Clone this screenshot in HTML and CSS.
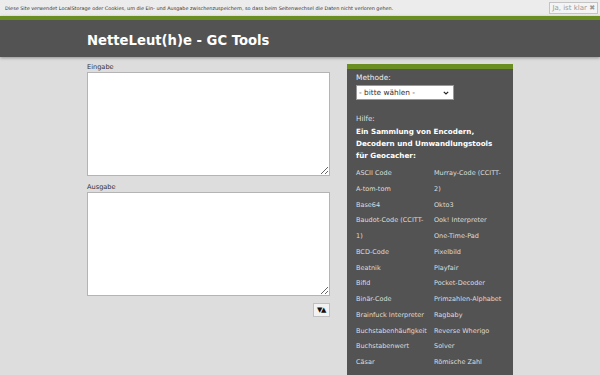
FILE: index.html
```html
<!DOCTYPE html>
<html lang="de">
<head>
<meta charset="utf-8">
<title>NetteLeut(h)e - GC Tools</title>
<link rel="stylesheet" href="styles.css">
</head>
<body>
<div class="cookie">
  <span class="cookie-text">Diese Site verwendet LocalStorage oder Cookies, um die Ein- und Ausgabe zwischenzuspeichern, so dass beim Seitenwechsel die Daten nicht verloren gehen.</span>
  <button class="cookie-btn">Ja, ist klar &#x2716;</button>
</div>
<header class="header">
  <div class="container">
    <h1 class="title">NetteLeut(h)e - GC Tools</h1>
  </div>
</header>
<main class="container main">
  <section class="work">
    <label class="label">Eingabe</label>
    <textarea class="box"></textarea>
    <label class="label label-out">Ausgabe</label>
    <textarea class="box"></textarea>
    <div class="swap-row"><button class="swap">&#x25BC;&#x25B2;</button></div>
  </section>
  <aside class="panel">
    <div class="panel-label">Methode:</div>
    <div class="select-wrap">
      <select class="method"><option>- bitte wählen -</option></select>
      <svg class="chev" width="6" height="4" viewBox="0 0 6 4"><path d="M0.8 0.8 L3 3 L5.2 0.8" fill="none" stroke="#222" stroke-width="1.2"/></svg>
    </div>
    <div class="help">Hilfe:</div>
    <p class="intro">Ein Sammlung von Encodern, Decodern und Umwandlungstools für Geocacher:</p>
    <div class="tools">
      <ul class="col">
        <li>ASCII Code</li>
        <li>A-tom-tom</li>
        <li>Base64</li>
        <li>Baudot-Code (CCITT-<wbr>1)</li>
        <li>BCD-Code</li>
        <li>Beatnik</li>
        <li>Bifid</li>
        <li>Binär-Code</li>
        <li>Brainfuck Interpreter</li>
        <li>Buchstabenhäufigkeit</li>
        <li>Buchstabenwert</li>
        <li>Cäsar</li>
      </ul>
      <ul class="col col-right">
        <li>Murray-Code (CCITT-<wbr>2)</li>
        <li>Okto3</li>
        <li>Ook! Interpreter</li>
        <li>One-Time-Pad</li>
        <li>Pixelbild</li>
        <li>Playfair</li>
        <li>Pocket-Decoder</li>
        <li>Primzahlen-Alphabet</li>
        <li>Ragbaby</li>
        <li>Reverse Wherigo</li>
        <li>Solver</li>
        <li>Römische Zahl</li>
      </ul>
    </div>
  </aside>
</main>
</body>
</html>
```
FILE: styles.css
```css
* { box-sizing: border-box; }
html, body { margin: 0; padding: 0; }
body {
  background: #dddddd;
  font-family: "DejaVu Sans", Verdana, sans-serif;
  color: #333;
  height: 375px;
  overflow: hidden;
}
.cookie {
  height: 16px;
  background: #ececec;
  display: flex;
  align-items: center;
  justify-content: space-between;
  padding: 0 2px 0 5px;
}
.cookie-text {
  font-size: 4.9px;
  color: #333;
}
.cookie-btn {
  font-family: "DejaVu Sans", sans-serif;
  font-size: 7px;
  color: #9a9a9a;
  background: #f4f4f4;
  border: 1px solid #c4c4c4;
  height: 12px;
  padding: 0 2px;
  line-height: 10px;
}
.header {
  border-top: 4px solid #6b8e23;
  background: #535353;
  height: 41px;
  box-shadow: 0 1px 3px rgba(0,0,0,0.35);
}
.container {
  width: 426px;
  margin: 0 auto;
}
.title {
  margin: 0;
  padding-top: 12px;
  font-size: 13.2px;
  font-weight: bold;
  color: #fff;
  line-height: 17px;
}
.main {
  display: flex;
  gap: 17px;
  margin-top: 5px;
}
.work {
  width: 243px;
  display: flex;
  flex-direction: column;
}
.label {
  font-size: 6.6px;
  color: #333;
  margin-top: 1px;
  line-height: 8px;
  height: 9px;
}
.label-out { margin-top: 7px; }
.box {
  width: 243px;
  height: 104px;
  border: 1px solid #b4b4b4;
  background: #fff;
  resize: vertical;
  margin: 0;
}
.swap-row {
  display: flex;
  justify-content: flex-end;
  margin-top: 7px;
}
.swap {
  width: 17px;
  height: 14px;
  padding: 0;
  border: 1px solid #c0c0c0;
  background: #f2f2f2;
  font-family: "DejaVu Sans", sans-serif;
  font-size: 7px;
  color: #111;
  letter-spacing: -1.5px;
  line-height: 12px;
  text-indent: -1px;
}
.panel {
  width: 166px;
  height: 320px;
  margin-top: 2px;
  background: #535353;
  border-top: 5px solid #6b8e23;
  padding: 4px 9px 0 9px;
  color: #eee;
}
.panel-label {
  font-size: 7.4px;
  line-height: 10px;
}
.select-wrap {
  position: relative;
  width: 98px;
  margin-top: 2px;
}
.method {
  display: block;
  width: 98px;
  height: 15px;
  font-family: "DejaVu Sans", sans-serif;
  font-size: 7.4px;
  padding: 0 2px;
  border: 1px solid #999;
  background: #fff;
  color: #333;
  appearance: none;
  -webkit-appearance: none;
  border-radius: 0;
}
.chev {
  position: absolute;
  right: 5px;
  top: 6px;
  pointer-events: none;
}
.help {
  margin-top: 14px;
  font-size: 7.2px;
  line-height: 10px;
  color: #ddd;
}
.intro {
  margin: 2px 0 0 0;
  font-size: 7.2px;
  font-weight: bold;
  line-height: 12px;
  color: #fff;
}
.tools {
  display: grid;
  grid-template-columns: 78px 1fr;
  margin-top: 4px;
}
.col {
  list-style: none;
  margin: 0;
  padding: 0;
}
.col li {
  font-size: 6.5px;
  line-height: 15.75px;
  color: #ddd;
  padding-right: 4px;
}
.col-right li { padding-right: 0; }
```
